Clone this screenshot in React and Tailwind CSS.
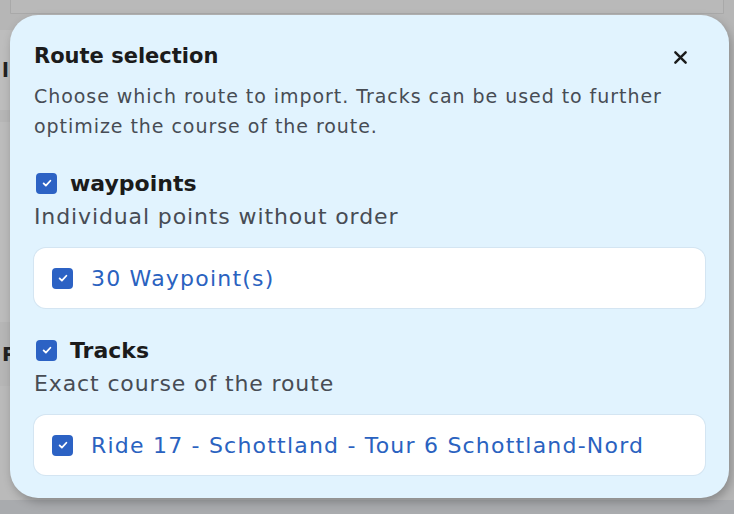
import React from 'react';

const font = { fontFamily: '"DejaVu Sans", Inter, sans-serif' };

const CheckBox = () => (
    <span className="flex h-[21px] w-[21px] shrink-0 items-center justify-center rounded-[4px] bg-[#2c62c4]">
        <svg viewBox="0 0 16 16" className="h-[12px] w-[12px]" fill="none" stroke="white" strokeWidth="2.4" strokeLinecap="round" strokeLinejoin="round">
            <path d="M3.5 8.5l3 3 6-6.5" />
        </svg>
    </span>
);

const Group = ({ title, subtitle, item }) => (
    <div className="flex flex-col">
        <div className="flex h-[28px] items-center gap-[13px] pl-[2px]">
            <CheckBox />
            <span className="text-[22px] font-bold text-[#1b1b1b]">{title}</span>
        </div>
        <p className="mt-[5px] text-[22px] leading-[30px] tracking-[0.04em] text-[#474c54]">{subtitle}</p>
        <div className="mt-[16px] flex h-[60px] items-center gap-[18px] rounded-[12px] bg-white pl-[18px] shadow-[0_0_0_1px_rgba(200,215,230,0.5)]">
            <CheckBox />
            <span className="text-[22px] tracking-[0.055em] text-[#2a62c0]">{item}</span>
        </div>
    </div>
);

export default function App() {
    return (
        <div className="relative h-[514px] w-[734px] overflow-hidden bg-[#b6b6b6]" style={font}>
            {/* dimmed page behind */}
            <div className="flex h-full flex-col">
                <div className="mx-[10px] mt-[-30px] h-[44px] rounded-b-none rounded-[14px] border border-[#a9a9a9] bg-[#b9b9b9]" />
                <div className="flex flex-1 gap-2 pt-[16px]">
                    <div className="flex w-[30px] flex-col gap-3">
                        <div className="flex h-[80px] items-center rounded-r-[12px] bg-[#bdbdbd] pl-[2px] text-[20px] font-bold text-[#222]">l</div>
                        <div className="h-[200px] rounded-r-[12px] bg-[#bcbcbc]" />
                        <div className="flex h-[40px] items-center pl-[2px] text-[20px] font-bold text-[#222]">P</div>
                        <div className="flex-1 rounded-r-[12px] bg-[#bababa]" />
                    </div>
                    <div className="flex-1" />
                </div>
                <div className="h-[14px] bg-[#a9abae]" />
            </div>

            <div className="absolute left-[10px] top-[15px] flex h-[483px] w-[719px] flex-col rounded-[28px] bg-[#e1f3fe] px-[24px] pt-[28px] shadow-[2px_4px_10px_rgba(0,0,0,0.25)]">
                <div className="flex h-[28px] items-center justify-between">
                    <h2 className="text-[21px] font-bold text-[#1b1b1b]">Route selection</h2>
                    <button className="mr-[15px] flex h-[20px] w-[20px] items-center justify-center">
                        <svg viewBox="0 0 16 16" className="h-[15px] w-[15px]" fill="none" stroke="#1b1b1b" strokeWidth="2.6" strokeLinecap="round">
                            <path d="M2.5 2.5l11 11M13.5 2.5l-11 11" />
                        </svg>
                    </button>
                </div>
                <p className="mt-[10px] w-[650px] text-[19px] leading-[30px] tracking-[0.05em] text-[#474c54]">
                    Choose which route to import. Tracks can be used to further optimize the course of the route.
                </p>
                <div className="mt-[28px]">
                    <Group title="waypoints" subtitle="Individual points without order" item="30 Waypoint(s)" />
                </div>
                <div className="mt-[28px]">
                    <Group title="Tracks" subtitle="Exact course of the route" item="Ride 17 - Schottland - Tour 6 Schottland-Nord" />
                </div>
            </div>
        </div>
    );
}
